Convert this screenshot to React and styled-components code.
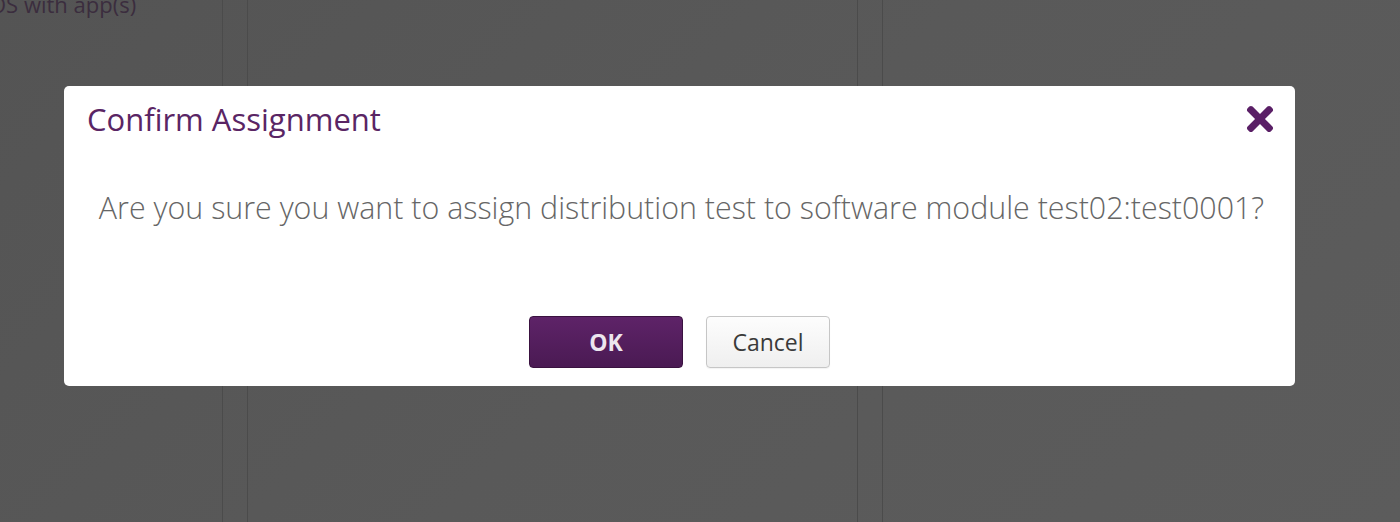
import React from "react";
import styled, { createGlobalStyle } from "styled-components";
import { FaTimes } from "react-icons/fa";

const Global = createGlobalStyle`
  html, body { margin: 0; padding: 0; }
  body { font-family: "Open Sans", "Liberation Sans", sans-serif; background: #5a5a5a; }
  #root { width: 1400px; height: 522px; }
`;

const Page = styled.div`
  position: relative;
  width: 1400px;
  height: 522px;
  overflow: hidden;
  background: linear-gradient(135deg, #545454 0%, #595959 50%, #5c5c5c 100%);
`;

const Columns = styled.div`
  display: flex;
  height: 100%;
  gap: 24px;
`;

const Panel = styled.div`
  width: ${(p) => p.$w}px;
  flex: ${(p) => (p.$grow ? 1 : "none")};
  height: 100%;
  box-sizing: border-box;
  border-left: ${(p) => (p.$left ? "1px solid #4b4b4b" : "none")};
  border-right: ${(p) => (p.$right ? "1px solid #4b4b4b" : "none")};
`;

const BgText = styled.div`
  margin-left: -11px;
  margin-top: -11px;
  font-size: 22px;
  color: #3b2d3e;
  white-space: nowrap;
`;

const Modal = styled.div`
  position: absolute;
  left: 64px;
  top: 86px;
  width: 1231px;
  height: 300px;
  box-sizing: border-box;
  background: #fff;
  border-radius: 5px;
  display: flex;
  flex-direction: column;
  padding: 0 16px 18px 23px;
`;

const Header = styled.div`
  display: flex;
  align-items: center;
  justify-content: space-between;
  height: 66px;
`;

const Title = styled.h2`
  margin: 0;
  font-weight: 400;
  font-size: 31px;
  color: #5a2564;
  letter-spacing: 0;
`;

const Close = styled.button`
  border: none;
  background: none;
  padding: 0;
  width: 38px;
  height: 38px;
  display: flex;
  align-items: center;
  justify-content: center;
  color: #5a1f66;
  cursor: pointer;
`;

const Body = styled.div`
  flex: 1;
  display: flex;
  justify-content: center;
  padding-top: 35px;
  margin-left: -3px;
`;

const Message = styled.p`
  margin: 0;
  font-weight: 300;
  font-size: 30.4px;
  color: #666666;
  white-space: nowrap;
`;

const Footer = styled.div`
  display: flex;
  justify-content: center;
  gap: 23px;
  margin-left: -7px;
`;

const Button = styled.button`
  height: 52px;
  width: ${(p) => p.$w}px;
  border-radius: 4px;
  font-family: "Open Sans", "Liberation Sans", sans-serif;
  font-size: 23px;
  padding: 0;
  cursor: pointer;
  ${(p) =>
    p.$primary
      ? `
    background: linear-gradient(#5e2368, #4a1a53);
    border: 1px solid #3a1240;
    color: #ece6ee;
    font-weight: 700;
  `
      : `
    background: linear-gradient(#fdfdfd, #efefef);
    border: 1px solid #c6c6c6;
    color: #3a3a3a;
    font-weight: 400;
    box-shadow: 0 1px 1px rgba(0,0,0,0.05);
  `}
`;

export default function App() {
  return (
    <Page>
      <Global />
      <Columns>
        <Panel $w={223} $right>
          <BgText>OS with app(s)</BgText>
        </Panel>
        <Panel $w={611} $left $right />
        <Panel $grow $left />
      </Columns>
      <Modal>
        <Header>
          <Title>Confirm Assignment</Title>
          <Close aria-label="close">
            <FaTimes size={38} />
          </Close>
        </Header>
        <Body>
          <Message>
            Are you sure you want to assign distribution test to software module test02:test0001?
          </Message>
        </Body>
        <Footer>
          <Button $primary $w={154}>OK</Button>
          <Button $w={124}>Cancel</Button>
        </Footer>
      </Modal>
    </Page>
  );
}
